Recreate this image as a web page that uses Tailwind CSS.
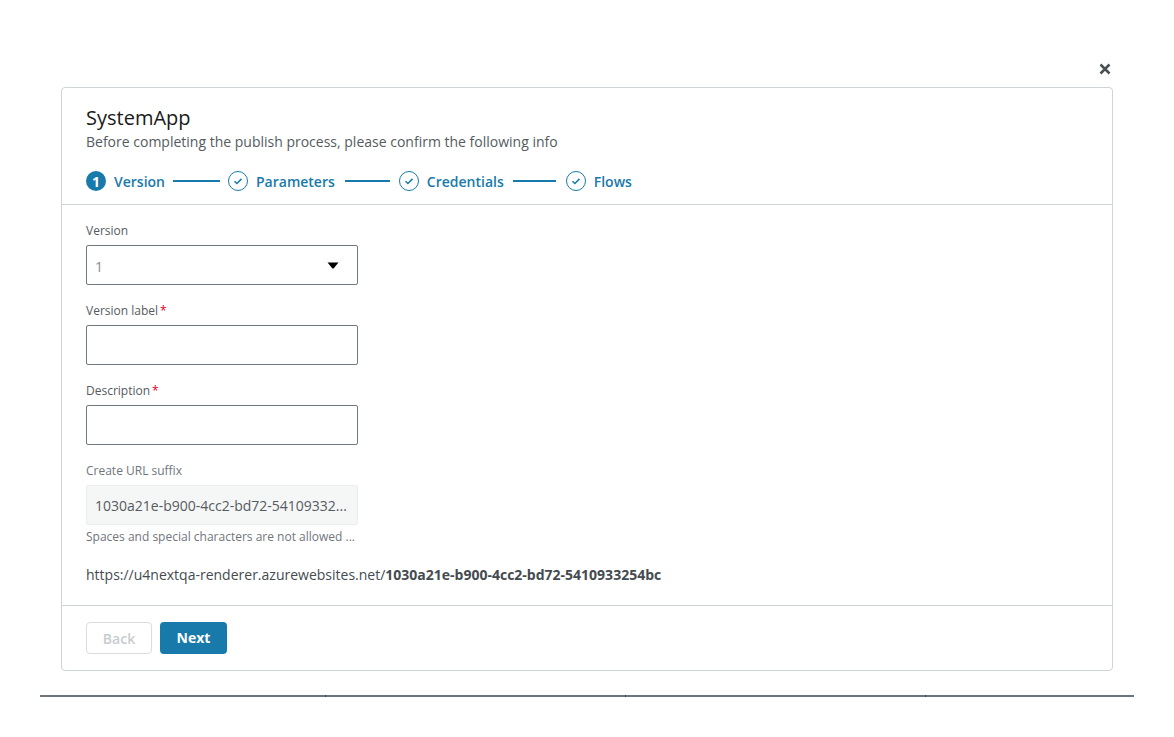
<!doctype html>
<html lang="en">
<head>
<meta charset="utf-8">
<title>SystemApp</title>
<script src="https://cdn.jsdelivr.net/npm/@tailwindcss/browser@4"></script>
</head>
<body class="bg-white font-['Open_Sans',sans-serif] text-[#444b50]">
<div class="h-[737px] overflow-hidden px-[40px] pt-[61px]">

  <!-- close -->
  <div class="flex justify-end h-[26px] pr-[23px]">
    <button class="w-[12px] h-[16px] flex items-center justify-center">
      <svg width="12" height="12" viewBox="0 0 12 12"><path d="M1.5 1.5l9 9M10.5 1.5l-9 9" stroke="#4a4f54" stroke-width="2.5" fill="none"/></svg>
    </button>
  </div>

  <!-- dialog -->
  <section class="ml-[21px] w-[1052px] h-[584px] border border-[#cfd4d8] rounded-[4px] flex flex-col">

    <!-- header + stepper -->
    <div class="h-[117px] border-b border-[#cfd4d8] px-[24px] pt-[16px]">
      <h2 class="text-[20px] leading-[27px] text-[#1a1a1a]">SystemApp</h2>
      <p class="text-[14px] leading-[20px] text-[#555b60] mt-[1px]">Before completing the publish process, please confirm the following info</p>

      <div class="flex items-center mt-[19px] h-[20px] text-[#187aab] text-[14px] font-semibold">
        <span class="w-[20px] h-[20px] rounded-full bg-[#187aab] text-white flex items-center justify-center text-[14px] font-bold">1</span>
        <span class="ml-[8px]">Version</span>
        <span class="w-[47px] h-[2px] bg-[#187aab] ml-[8px]"></span>
        <svg class="ml-[8px]" width="20" height="20" viewBox="0 0 20 20"><circle cx="10" cy="10" r="9.5" fill="none" stroke="#187aab"/><path d="M6.5 10.2l2.4 2.3 4.6-4.6" fill="none" stroke="#187aab" stroke-width="1.5"/></svg>
        <span class="ml-[8px]">Parameters</span>
        <span class="w-[45px] h-[2px] bg-[#187aab] ml-[10px]"></span>
        <svg class="ml-[9px]" width="20" height="20" viewBox="0 0 20 20"><circle cx="10" cy="10" r="9.5" fill="none" stroke="#187aab"/><path d="M6.5 10.2l2.4 2.3 4.6-4.6" fill="none" stroke="#187aab" stroke-width="1.5"/></svg>
        <span class="ml-[8px]">Credentials</span>
        <span class="w-[43px] h-[2px] bg-[#187aab] ml-[9px]"></span>
        <svg class="ml-[10px]" width="20" height="20" viewBox="0 0 20 20"><circle cx="10" cy="10" r="9.5" fill="none" stroke="#187aab"/><path d="M6.5 10.2l2.4 2.3 4.6-4.6" fill="none" stroke="#187aab" stroke-width="1.5"/></svg>
        <span class="ml-[8px]">Flows</span>
      </div>
    </div>

    <!-- form -->
    <div class="flex-1 px-[24px] pt-[17px]">
      <div class="w-[272px]">
        <label class="block text-[12px] leading-[18px] mb-[5px] text-[#555b60]">Version</label>
        <div class="h-[40px] border border-[#6f7981] rounded-[2px] flex items-center justify-between pl-[8px] pr-[18px]">
          <span class="text-[14px] text-[#878d92] pt-[3px]">1</span>
          <svg width="12" height="7" viewBox="0 0 12 7"><path d="M0.5 0.5h11l-4.5 5.4q-1 1-2 0z" fill="#000"/></svg>
        </div>

        <label class="block text-[12px] leading-[18px] mt-[17px] mb-[5px] text-[#555b60]">Version label<span class="text-[#e0001b] ml-[2px]">*</span></label>
        <input type="text" class="block w-full h-[40px] border border-[#6f7981] rounded-[2px]">

        <label class="block text-[12px] leading-[18px] mt-[17px] mb-[5px] text-[#555b60]">Description<span class="text-[#e0001b] ml-[2px]">*</span></label>
        <input type="text" class="block w-full h-[40px] border border-[#6f7981] rounded-[2px]">

        <label class="block text-[12px] leading-[18px] mt-[17px] mb-[5px] text-[#6f767b]">Create URL suffix</label>
        <div class="h-[40px] border border-[#ebedee] bg-[#f5f6f6] rounded-[2px] flex items-center pl-[8px] text-[14px] text-[#555b60]">
          <span class="truncate">1030a21e-b900-4cc2-bd72-54109332...</span>
        </div>
        <p class="text-[12px] leading-[18px] mt-[3px] text-[#6f767b] whitespace-nowrap">Spaces and special characters are not allowed ...</p>
      </div>
      <p class="text-[14px] leading-[20px] mt-[19px] text-[#444b50]">https://u4nextqa-renderer.azurewebsites.net/<strong class="font-bold">1030a21e-b900-4cc2-bd72-5410933254bc</strong></p>
    </div>

    <!-- footer -->
    <div class="h-[65px] border-t border-[#cfd4d8] px-[24px] pt-[16px] flex gap-[8px] items-start">
      <button class="w-[66px] h-[32px] border border-[#dadddf] rounded-[4px] text-[14px] font-semibold text-[#c8cccf]">Back</button>
      <button class="w-[67px] h-[32px] pb-[1px] rounded-[4px] bg-[#187aab] text-[14px] font-bold text-white">Next</button>
    </div>
  </section>

  <!-- page underneath, with the column ticks showing through -->
  <div class="relative mt-[24px] h-[2px] bg-[#6c757c]">
    <span class="absolute left-[285px] top-0 w-[1px] h-[2px] bg-[#3f464b]"></span>
    <span class="absolute left-[585px] top-0 w-[1px] h-[2px] bg-[#3f464b]"></span>
    <span class="absolute left-[885px] top-0 w-[1px] h-[2px] bg-[#3f464b]"></span>
  </div>
</div>
</body>
</html>
